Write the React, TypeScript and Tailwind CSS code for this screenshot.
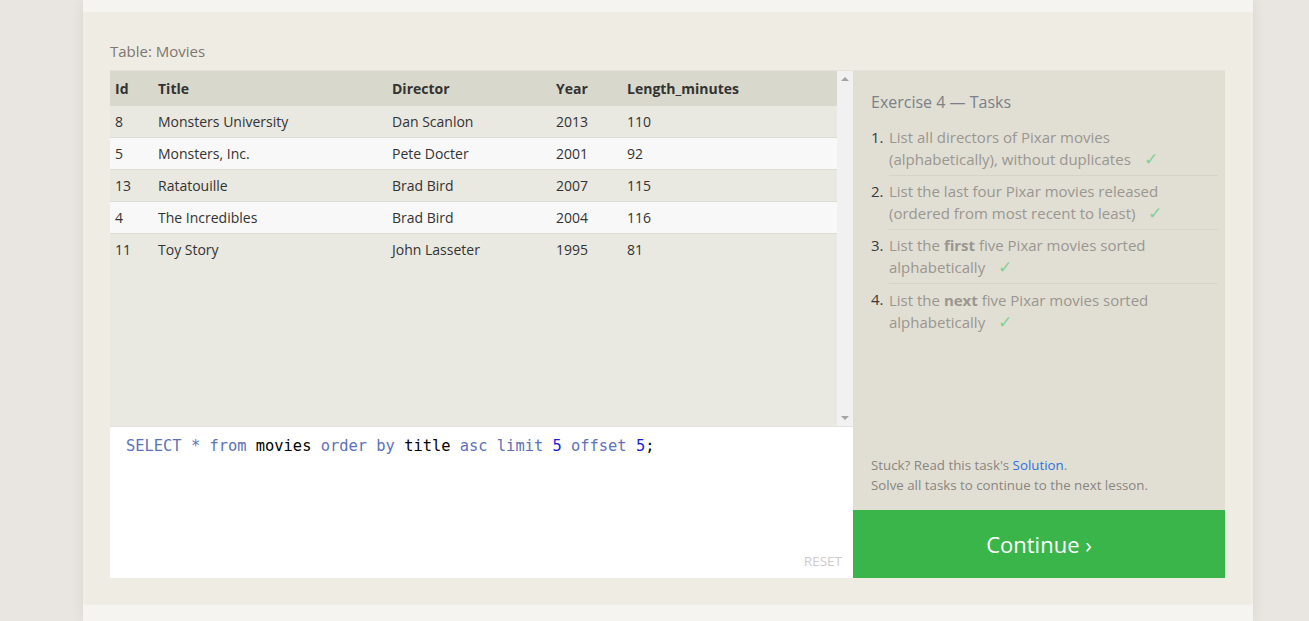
import React from 'react';

interface Movie {
  id: number;
  title: string;
  director: string;
  year: number;
  length: number;
}

const movies: Movie[] = [
  { id: 8, title: 'Monsters University', director: 'Dan Scanlon', year: 2013, length: 110 },
  { id: 5, title: 'Monsters, Inc.', director: 'Pete Docter', year: 2001, length: 92 },
  { id: 13, title: 'Ratatouille', director: 'Brad Bird', year: 2007, length: 115 },
  { id: 4, title: 'The Incredibles', director: 'Brad Bird', year: 2004, length: 116 },
  { id: 11, title: 'Toy Story', director: 'John Lasseter', year: 1995, length: 81 },
];

const Check = () => <span className="ml-[9px] text-[17px] leading-[22px] text-[#85cf94]">✓</span>;

export default function App() {
  return (
    <div className="min-h-screen bg-[#e9e5e1] flex pl-[83px] font-['Open_Sans',sans-serif]">
      <div className="w-[1170px] bg-[#f5f4f0] shadow-[0_0_14px_rgba(0,0,0,0.07)] flex flex-col">
        <div className="h-3" />

        {/* Exercise card */}
        <div className="bg-[#efece4] rounded-b-[4px] pl-[27px] pr-[28px] pt-[30px] pb-[27px]">
          <div className="text-[15px] text-[#7d7870] leading-[18px] mb-[10px]">Table: Movies</div>

          <div className="flex">
            {/* Left: table + editor */}
            <div className="w-[743px] flex flex-col">
              <div className="flex h-[356px] border-t border-[#e4e2d9]">
                <div className="flex-1 bg-[#e9e8e1] text-[14px] text-[#333]">
                  <div className="flex h-[35px] items-center bg-[#d9d8cc] font-bold">
                    <div className="w-[48px] pl-[5px]">Id</div>
                    <div className="w-[234px]">Title</div>
                    <div className="w-[164px]">Director</div>
                    <div className="w-[71px]">Year</div>
                    <div>Length_minutes</div>
                  </div>
                  {movies.map((m, i) => (
                    <div
                      key={m.id}
                      className={
                        i % 2 === 1
                          ? 'flex h-[32px] items-center bg-[#f8f8f8] border-b border-[#dddcd5]'
                          : i === movies.length - 1
                            ? 'flex h-[32px] items-center bg-[#e9e8e1] border-b border-transparent'
                            : 'flex h-[32px] items-center bg-[#e9e8e1] border-b border-[#dddcd5]'
                      }
                    >
                      <div className="w-[48px] pl-[5px]">{m.id}</div>
                      <div className="w-[234px]">{m.title}</div>
                      <div className="w-[164px]">{m.director}</div>
                      <div className="w-[71px]">{m.year}</div>
                      <div>{m.length}</div>
                    </div>
                  ))}
                </div>
                {/* Scrollbar */}
                <div className="w-[16px] bg-[#f1f1f1] flex flex-col justify-between items-center py-[6px]">
                  <div className="w-0 h-0 border-l-[4px] border-r-[4px] border-b-[4px] border-l-transparent border-r-transparent border-b-[#a3a3a3]" />
                  <div className="w-0 h-0 border-l-[4px] border-r-[4px] border-t-[4px] border-l-transparent border-r-transparent border-t-[#a3a3a3]" />
                </div>
              </div>

              {/* Editor */}
              <div className="h-[152px] bg-white border-t border-[#e4e2d9] flex flex-col justify-between px-[16px] pt-[9px] pb-[9px]">
                <div className="font-['DejaVu_Sans_Mono',monospace] text-[15.4px] leading-[20px] text-black whitespace-pre">
                  <span className="text-[#5c72b8]">SELECT</span>{' '}
                  <span className="text-[#5c72b8]">*</span>{' '}
                  <span className="text-[#5c72b8]">from</span> movies{' '}
                  <span className="text-[#5c72b8]">order</span>{' '}
                  <span className="text-[#5c72b8]">by</span> title{' '}
                  <span className="text-[#5c72b8]">asc</span>{' '}
                  <span className="text-[#5c72b8]">limit</span>{' '}
                  <span className="text-[#1b1bd9]">5</span>{' '}
                  <span className="text-[#5c72b8]">offset</span>{' '}
                  <span className="text-[#1b1bd9]">5</span>;
                </div>
                <div className="self-end text-[13.5px] text-[#cccccc] leading-[16px] -mr-[5px]">RESET</div>
              </div>
            </div>

            {/* Right: tasks */}
            <div className="w-[372px] flex flex-col">
              <div className="h-[440px] bg-[#e1dfd4] border-t border-[#e6e4db] pl-[18px] pr-[7px] pt-[20px] flex flex-col">
                <h2 className="text-[16px] leading-[22px] text-[#7b8089] mb-[13px]">Exercise 4 — Tasks</h2>
                <ol className="text-[15px] leading-[22px] text-[#9a9690]">
                  <li className="flex">
                    <span className="w-[18px] text-[#3a3a3a]">1.</span>
                    <div className="flex-1 border-b border-[#d6d4c9] pb-[5px]">
                      List all directors of Pixar movies
                      <br />
                      (alphabetically), without duplicates <Check />
                    </div>
                  </li>
                  <li className="flex">
                    <span className="w-[18px] text-[#3a3a3a] pt-[4px]">2.</span>
                    <div className="flex-1 border-b border-[#d6d4c9] pt-[4px] pb-[5px]">
                      List the last four Pixar movies released
                      <br />
                      (ordered from most recent to least) <Check />
                    </div>
                  </li>
                  <li className="flex">
                    <span className="w-[18px] text-[#3a3a3a] pt-[4px]">3.</span>
                    <div className="flex-1 border-b border-[#d6d4c9] pt-[4px] pb-[5px]">
                      List the <b className="font-bold">first</b> five Pixar movies sorted
                      <br />
                      alphabetically <Check />
                    </div>
                  </li>
                  <li className="flex">
                    <span className="w-[18px] text-[#3a3a3a] pt-[4px]">4.</span>
                    <div className="flex-1 pt-[5px] pb-[5px]">
                      List the <b className="font-bold">next</b> five Pixar movies sorted
                      <br />
                      alphabetically <Check />
                    </div>
                  </li>
                </ol>

                <div className="mt-auto mb-[15px] text-[13.3px] leading-[20px] text-[#8a8580]">
                  <div>
                    Stuck? Read this task's <span className="text-[#2f6fe0]">Solution</span>.
                  </div>
                  <div>Solve all tasks to continue to the next lesson.</div>
                </div>
              </div>
              <button className="h-[68px] bg-[#3ab54a] text-white text-[22px] flex items-center justify-center">
                Continue ›
              </button>
            </div>
          </div>
        </div>

        <div className="flex-1" />
      </div>
    </div>
  );
}
